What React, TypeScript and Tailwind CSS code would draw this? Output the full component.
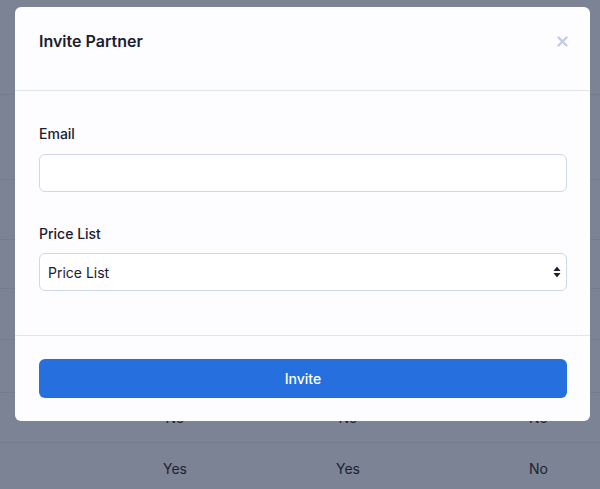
import React from "react";

const rows = [
  { h: "h-[95px]", cells: ["", "", ""] },
  { h: "h-[85px]", cells: ["", "", ""] },
  { h: "h-[60px]", cells: ["", "", ""] },
  { h: "h-[49px]", cells: ["", "", ""] },
  { h: "h-[51px]", cells: ["", "", ""] },
  { h: "h-[53px]", cells: ["", "", ""] },
  { h: "h-[50px]", cells: ["No", "No", "No"] },
  { h: "h-[52px]", cells: ["Yes", "Yes", "No"] },
];

const CloseIcon = () => (
  <svg width="11" height="11" viewBox="0 0 11 11" fill="none">
    <path d="M1.5 1.5l8 8M9.5 1.5l-8 8" stroke="#c3cde0" strokeWidth="2.4" strokeLinecap="round" />
  </svg>
);

const SortArrows = () => (
  <svg width="8" height="12" viewBox="0 0 8 12" fill="#1a202c">
    <path d="M4 0.5L7.5 5H0.5z" />
    <path d="M4 11.5L0.5 7h7z" />
  </svg>
);

export default function App() {
  return (
    <div
      className="relative h-[489px] w-[600px] overflow-hidden bg-[#7b8394] text-[#1c2230]"
      style={{ fontFamily: "Inter, 'Noto Sans', sans-serif" }}
    >
      {/* table behind the overlay */}
      <div className="flex flex-col">
        {rows.map((r, i) => (
          <div key={i} className={`${r.h} grid grid-cols-[100px_150px_196px_1fr] items-center border-b border-[#747c8d] text-[14px]`}>
            <div />
            <div className="text-center">{r.cells[0]}</div>
            <div className="text-center">{r.cells[1]}</div>
            <div className="text-right pr-[52px]">{r.cells[2]}</div>
          </div>
        ))}
      </div>

      {/* modal */}
      <div className="absolute left-[15px] top-[7px] w-[575px] h-[414px] rounded-[6px] bg-[#fdfcff] flex flex-col">
        <div className="h-[84px] pl-6 pr-[23px] pt-6 flex justify-between border-b border-[#dfe6f0]">
          <h2 className="text-[16px] leading-[20px] font-semibold text-[#1a202c]">Invite Partner</h2>
          <button className="h-5 w-5 flex items-center justify-center -mr-[5px]">
            <CloseIcon />
          </button>
        </div>

        <div className="pl-6 pr-[23px] pt-[33px] pb-[44px] flex flex-col border-b border-[#dfe6f0]">
          <label className="text-[14px] leading-[20px] font-medium text-[#1a202c] mb-[10px]">Email</label>
          <input className="h-[38px] w-full rounded-[6px] border border-[#cdd8e8] bg-white outline-none px-2 text-[14px]" />

          <label className="mt-[32px] text-[14px] leading-[20px] font-medium text-[#1a202c] mb-[9px]">Price List</label>
          <div className="h-[38px] w-full rounded-[6px] border border-[#cdd8e8] bg-white flex items-center justify-between pl-2 pr-[5px]">
            <span className="text-[14px] text-[#1a202c]">Price List</span>
            <SortArrows />
          </div>
        </div>

        <div className="pl-6 pr-[23px] pt-[23px]">
          <button className="h-[39px] w-full rounded-[6px] bg-[#256fdf] text-white text-[14px] font-medium">
            Invite
          </button>
        </div>
      </div>
    </div>
  );
}
